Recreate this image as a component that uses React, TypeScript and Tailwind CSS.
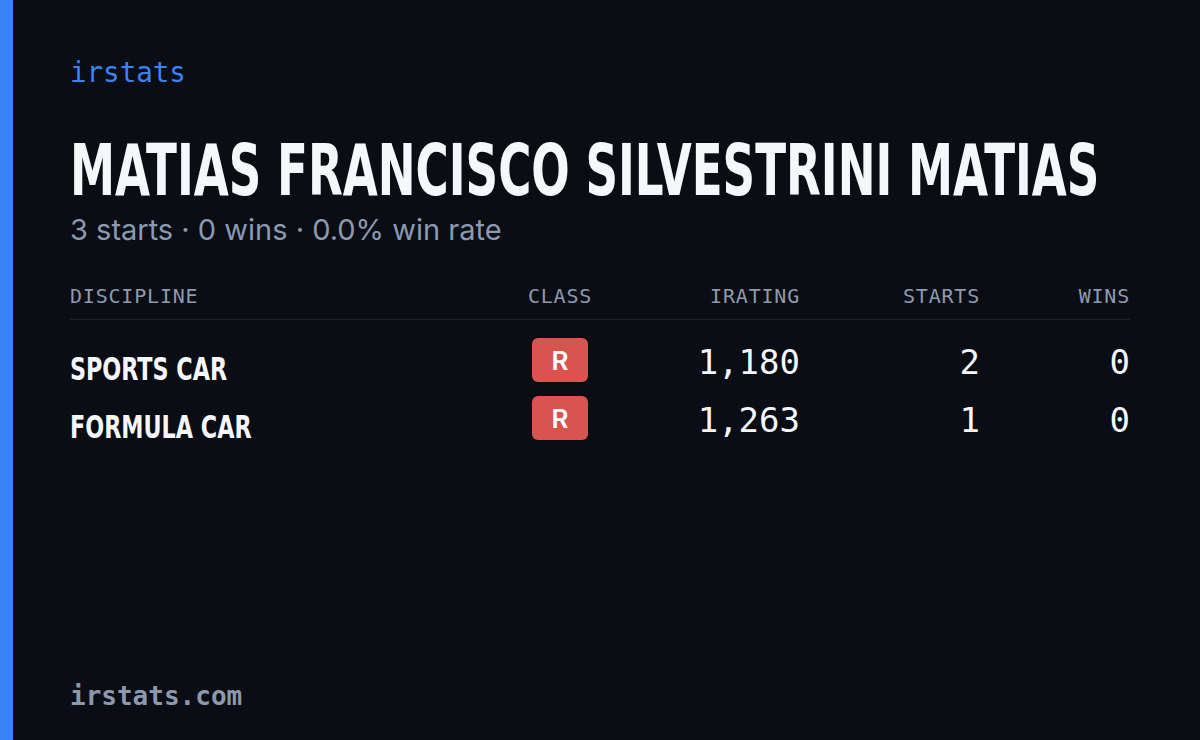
import React from "react";

const mono = { fontFamily: '"DejaVu Sans Mono", "Liberation Mono", monospace' };

const rows = [
  { name: "SPORTS CAR", cls: "R", ir: "1,180", starts: "2", wins: "0" },
  { name: "FORMULA CAR", cls: "R", ir: "1,263", starts: "1", wins: "0" },
];

export default function App() {
  return (
    <div className="w-[1200px] h-[740px] bg-[#0a0d14] flex overflow-hidden">
      <div className="w-[13px] h-full bg-[#3b82f6] shrink-0" />
      <div className="flex-1 min-w-0 flex flex-col pl-[57px] pr-[70px] pt-[54px] pb-[26px]">
        <div className="text-[27.5px] leading-[36px] font-medium text-[#3b82f6] font-['DejaVu_Sans_Mono',monospace]">irstats</div>
        <h1 className="mt-[42px] text-[72px] leading-[76px] font-bold text-[#f5f7fb] whitespace-nowrap font-['DejaVu_Sans_Condensed',sans-serif]">
          <span className="inline-block origin-left scale-x-[0.698]">MATIAS FRANCISCO SILVESTRINI MATIAS</span>
        </h1>
        <div className="mt-[4px] text-[29px] leading-[36px] text-[#8a9ab3] font-['Inter',sans-serif]">3 starts · 0 wins · 0.0% win rate</div>
        <div className="mt-[36px] w-[1060px] grid grid-cols-[430px_120px_180px_180px_150px] text-[20px] leading-[24px] text-[#8d9ab0] tracking-[0.04em] pb-[11px] border-b border-[#1b202b] font-['DejaVu_Sans_Mono',monospace]">
          <div>DISCIPLINE</div>
          <div className="text-center">CLASS</div>
          <div className="text-right">IRATING</div>
          <div className="text-right">STARTS</div>
          <div className="text-right">WINS</div>
        </div>
        <div className="mt-[7px] w-[1060px] flex flex-col gap-[14px]">
          {rows.map((r) => (
            <div key={r.name} className="grid grid-cols-[430px_120px_180px_180px_150px] items-center h-[44px]">
              <div className="pt-[18px] text-[32px] font-bold text-[#f5f7fb] whitespace-nowrap font-['DejaVu_Sans_Condensed',sans-serif]">
                <span className="inline-block origin-left scale-x-[0.774]">{r.name}</span>
              </div>
              <div className="flex justify-center">
                <div className="w-[56px] h-[44px] rounded-[6px] bg-[#d9534f] flex items-center justify-center text-white text-[26px] font-semibold font-['Inter',sans-serif]">{r.cls}</div>
              </div>
              <div className="pt-[5px] text-right text-[34px] font-medium text-[#f5f7fb]" style={mono}>{r.ir}</div>
              <div className="pt-[5px] text-right text-[34px] font-medium text-[#f5f7fb]" style={mono}>{r.starts}</div>
              <div className="pt-[5px] text-right text-[34px] font-medium text-[#f5f7fb]" style={mono}>{r.wins}</div>
            </div>
          ))}
        </div>
        <div className="mt-auto text-[26px] leading-[36px] font-bold text-[#8b98ae] font-['DejaVu_Sans_Mono',monospace]">irstats.com</div>
      </div>
    </div>
  );
}
